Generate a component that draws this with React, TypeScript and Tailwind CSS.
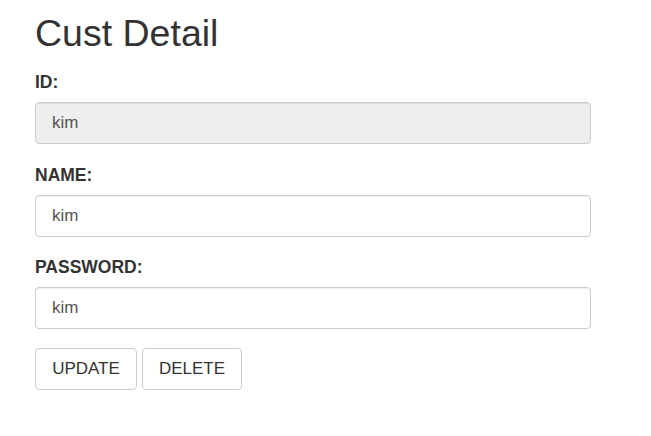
const fields = [
  { label: 'ID:', value: 'kim', readOnly: true },
  { label: 'NAME:', value: 'kim', readOnly: false },
  { label: 'PASSWORD:', value: 'kim', readOnly: false },
];

const App = () => {
  return (
    <div className="min-h-screen bg-white pl-[35px] pt-[13px] font-['Liberation_Sans',Arial,sans-serif] text-[#333]">
      <h1 className="text-[37.5px] leading-[40px] font-normal">Cust Detail</h1>

      <form className="w-[556px] mt-[17px]">
        {fields.map((field) => (
          <div key={field.label} className="mb-[18.5px] last:mb-[20px]">
            <label className="block text-[17.5px] leading-[24px] font-bold mb-2">{field.label}</label>
            <input
              type="text"
              defaultValue={field.value}
              readOnly={field.readOnly}
              className={`block w-full h-[42px] px-4 text-[17px] text-[#555] border border-[#ccc] rounded-[4px] shadow-[inset_0_1px_1px_rgba(0,0,0,0.075)] outline-none ${
                field.readOnly ? 'bg-[#eee]' : 'bg-white'
              }`}
            />
          </div>
        ))}

        <div className="flex gap-[5px]">
          <button type="button" className="w-[102px] h-[42px] text-[17px] text-[#333] bg-white border border-[#ccc] rounded-[4px]">
            UPDATE
          </button>
          <button type="button" className="w-[100px] h-[42px] text-[17px] text-[#333] bg-white border border-[#ccc] rounded-[4px]">
            DELETE
          </button>
        </div>
      </form>
    </div>
  );
};

export default App;
